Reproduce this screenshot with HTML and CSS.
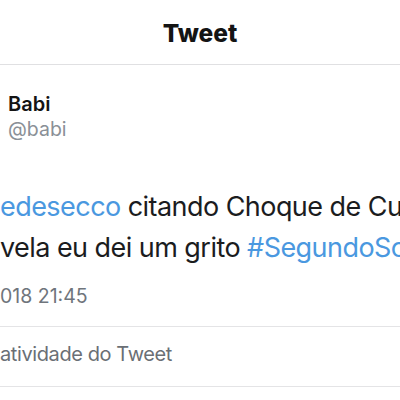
FILE: index.html
```html
<!DOCTYPE html>
<html lang="pt">
<head>
<meta charset="utf-8">
<link rel="stylesheet" href="styles.css">
</head>
<body>
<div class="screen">
  <header class="nav">Tweet</header>
  <div class="author">
    <div class="name">Babi</div>
    <div class="handle">@babi</div>
  </div>
  <div class="tweet-text">
    <div class="line line1"><span class="link">edesecco</span> citando Choque de Cultura</div>
    <div class="line line2">vela eu dei um grito <span class="link">#SegundoSol</span></div>
  </div>
  <div class="date">018 21:45</div>
  <div class="activity">atividade do Tweet</div>
</div>
</body>
</html>
```

FILE: styles.css
```css
html, body {
  margin: 0;
  padding: 0;
  background: #ffffff;
}
.screen {
  width: 400px;
  height: 400px;
  overflow: hidden;
  font-family: Inter, "Liberation Sans", Arial, sans-serif;
  color: #17181a;
}
.nav {
  height: 65px;
  box-sizing: border-box;
  padding-top: 18px;
  line-height: 30px;
  font-size: 24.5px;
  font-weight: 800;
  text-align: center;
  color: #141414;
  border-bottom: 1px solid #e0e0e2;
}
.author {
  margin-top: 27px;
  padding-left: 8px;
}
.name {
  font-size: 20px;
  font-weight: 600;
  line-height: 24px;
  color: #141414;
}
.handle {
  font-size: 19.5px;
  line-height: 27px;
  color: #8a9097;
}
.tweet-text {
  margin-top: 43px;
  font-size: 27px;
  line-height: 41px;
  letter-spacing: -0.55px;
  white-space: nowrap;
  color: #1b1c1e;
}
.line {
  overflow: hidden;
}
.link {
  color: #4a98e0;
}
.date {
  margin-top: 15px;
  font-size: 19.5px;
  line-height: 26px;
  padding-bottom: 17px;
  color: #6f757c;
  border-bottom: 1px solid #e4e4e6;
}
.activity {
  padding-top: 14px;
  padding-bottom: 19px;
  font-size: 20px;
  line-height: 26px;
  letter-spacing: -0.4px;
  color: #6a6f75;
  border-bottom: 1px solid #e4e4e6;
}
```
